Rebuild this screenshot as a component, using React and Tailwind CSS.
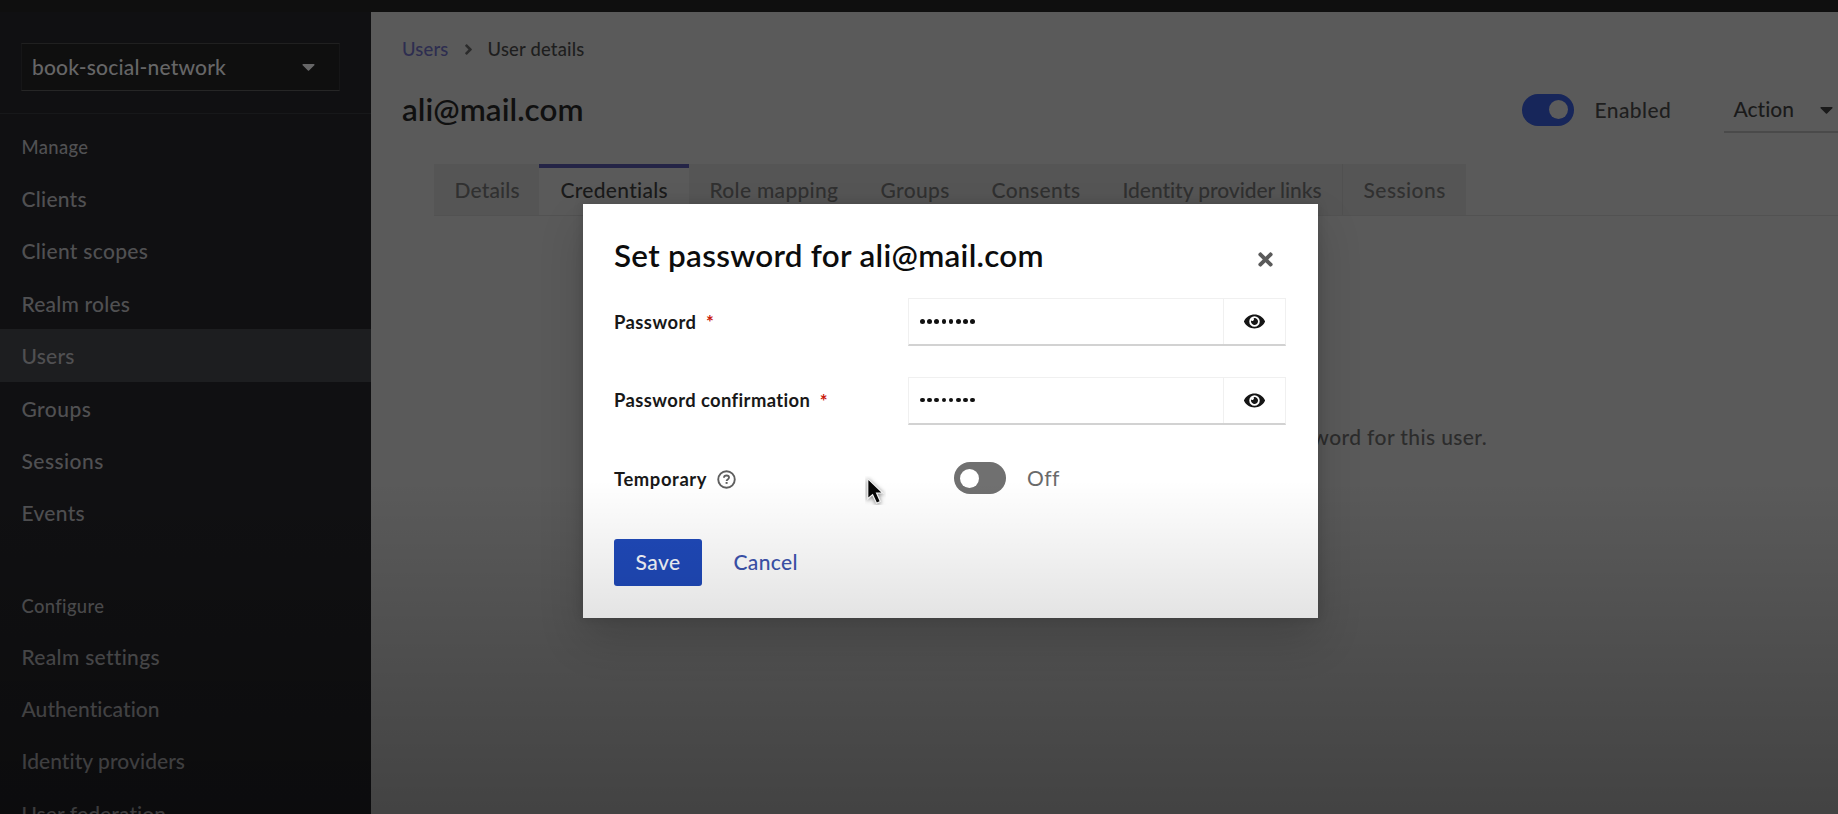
import React from 'react';
import { FaEye, FaTimes, FaCaretDown, FaAngleRight } from 'react-icons/fa';

function NavGroup({ title, items, className, listClassName }) {
  return (
    <section className={`shrink-0 ${className}`}>
      <h2 className="flex h-[26px] items-center pl-[21.5px] text-[18.4px] font-medium tracking-[0.35px] text-[#515153]">{title}</h2>
      <ul className={listClassName}>
        {items.map(({ label, active, tracking }) => (
          <li
            key={label}
            className={`flex h-[52.4px] items-center pl-[21.5px] pt-px text-[21px] font-medium text-[#505052] ${tracking} ${active ? 'bg-[#1d1e20]' : ''}`}
          >
            {label}
          </li>
        ))}
      </ul>
    </section>
  );
}

const manageItems = [
  { label: 'Clients', tracking: 'tracking-[0.25px]' },
  { label: 'Client scopes', tracking: 'tracking-[0.3px]' },
  { label: 'Realm roles', tracking: 'tracking-[0.2px]' },
  { label: 'Users', tracking: 'tracking-[0.25px]', active: true },
  { label: 'Groups', tracking: 'tracking-[0.45px]' },
  { label: 'Sessions', tracking: 'tracking-[0.45px]' },
  { label: 'Events', tracking: 'tracking-[0.3px]' },
];

const configureItems = [
  { label: 'Realm settings', tracking: 'tracking-[0.3px]' },
  { label: 'Authentication', tracking: 'tracking-[0.05px]' },
  { label: 'Identity providers', tracking: 'tracking-[0.05px]' },
  { label: 'User federation', tracking: 'tracking-[0.1px]' },
];

function Sidebar() {
  return (
    <nav className="flex h-full w-[371px] shrink-0 flex-col overflow-hidden bg-[#101012]">
      <div className="flex h-[102px] shrink-0 flex-col justify-end border-b border-[#17181a] px-[21px] pb-[22.500px]">
        <button className="flex h-[48px] w-[319px] items-center justify-between border border-b-[#262626] border-l-[#161617] border-r-[#161617] border-t-[#202020] bg-[#0f0f0f] pl-[10px] pr-[20.500px] text-[21px] font-medium tracking-[0.18px] text-[#666667]">
          book-social-network
          <FaCaretDown size={21} />
        </button>
      </div>
      <NavGroup title="Manage" items={manageItems} className="mt-[21px]" listClassName="mt-[11px]" />
      <NavGroup title="Configure" items={configureItems} className="mt-[55px]" listClassName="mt-[10px]" />
    </nav>
  );
}

const tabs = [
  { label: 'Details', box: 'w-[105px] tracking-[0.15px]' },
  { label: 'Role mapping', box: 'w-[171px] tracking-[0.3px]' },
  { label: 'Groups', box: 'w-[111px] tracking-[0.35px]' },
  { label: 'Consents', box: 'w-[131px] tracking-[0.35px]' },
  { label: 'Identity provider links', box: 'w-[241px] border-r border-[#505050] tracking-[-0.05px]' },
  { label: 'Sessions', box: 'w-[123px] tracking-[0.45px]' },
];

function Tab({ label, box }) {
  return (
    <div className={`flex items-center whitespace-nowrap bg-[#555555] pl-[20.5px] text-[21px] font-medium text-[#303030] ${box}`}>
      {label}
    </div>
  );
}

function Switch({ on, className }) {
  return (
    <span className={`flex h-[32px] w-[52.500px] shrink-0 items-center rounded-full px-[6.5px] ${on ? 'justify-end' : ''} ${className}`}>
      <span className={`h-[19px] w-[19px] rounded-full ${on ? 'bg-[#5c5c5c]' : 'bg-white'}`} />
    </span>
  );
}

function UserDetails() {
  return (
    <main className="flex min-w-0 flex-1 flex-col overflow-hidden bg-[#5a5a5a]">
      <div className="flex h-[75px] items-center pl-[31px] text-[18.4px] font-medium">
        <span className="tracking-[0.2px] text-[#2d2d50]">Users</span>
        <FaAngleRight size={17} className="ml-[11px] mr-[11px] text-[#2b2b2b]" />
        <span className="tracking-[0.2px] text-[#1e1e1e]">User details</span>
      </div>
      <div className="flex h-[46px] items-center">
        <h1 className="flex-1 pb-px pl-[31px] text-[31.4px] font-semibold tracking-[0.05px] text-[#101010]">ali@mail.com</h1>
        <Switch on className="-mt-px bg-[#17265a]" />
        <span className="ml-[20.500px] w-[129px] text-[21px] font-medium tracking-[0.4px] text-[#1e1e1e]">Enabled</span>
        <div className="flex h-[45px] w-[114.500px] items-center justify-between border-b-2 border-[#4a4a4a] pl-[10px] pr-[1.500px] text-[21px] font-medium text-[#1a1a1a]">
          Action
          <FaCaretDown size={21} />
        </div>
      </div>
      <div className="mt-[31px] ml-[63px] flex h-[52px] border-b border-[#525252]">
        <Tab {...tabs[0]} />
        <div className="flex w-[150px] items-center border-t-4 border-[#242446] pl-[21.5px] text-[21px] font-medium tracking-[0.3px] text-[#1a1a1a]">
          <span className="-mt-[4px]">Credentials</span>
        </div>
        {tabs.slice(1).map((tab) => (
          <Tab key={tab.label} {...tab} />
        ))}
      </div>
      <p className="mt-[207px] pr-[351px] text-right text-[21px] leading-[28px] font-medium tracking-[0.4px] text-[#2c2c2c]">
        You can set password for this user.
      </p>
    </main>
  );
}

function PasswordInput() {
  return (
    <div className="flex h-[48px] border border-b-2 border-[#f0f0f0] border-b-[#d2d2d2] bg-white">
      <div className="flex flex-1 items-center gap-[2.6px] border-r border-[#f0f0f0] pl-[11px]">
        {Array.from({ length: 8 }, (_, i) => (
          <span key={i} className="h-[4.6px] w-[4.6px] rounded-full bg-[#111111]" />
        ))}
      </div>
      <div className="flex w-[61px] items-center justify-center text-[#151515]">
        <FaEye size={21} />
      </div>
    </div>
  );
}

function Required() {
  return <span className="ml-[9.500px] text-[18.4px] leading-none text-[#c9190b]">*</span>;
}

function HelpIcon() {
  return (
    <svg viewBox="0 0 20 20" width="19" height="19" fill="none" stroke="#5f5f5f" strokeWidth="2" className="ml-[10px]">
      <circle cx="10" cy="10" r="8.7" />
      <path d="M7.3 8.1C7.4 6.5 8.5 5.8 10 5.8c1.600 0 2.700.9 2.700 2.200 0 1.900-2.600 1.900-2.600 3.500" strokeWidth="1.900" />
      <path d="M10.100 12.600v2" strokeWidth="2.100" />
    </svg>
  );
}

function PasswordDialog() {
  return (
    <div
      role="dialog"
      className="absolute left-[582.500px] top-[204px] flex h-[414px] w-[735px] flex-col bg-white px-[31.500px] shadow-[0_21px_42px_rgba(3,3,3,0.16),0_0_10px_rgba(3,3,3,0.14)]"
    >
      <header className="mt-[32px] flex h-[40px] items-center justify-between">
        <h2 className="text-[31.4px] font-semibold tracking-[0.3px] text-[#0c0c0c]">Set password for ali@mail.com</h2>
        <FaTimes size={21} className="mr-[10.500px] mt-[6px] text-[#5a5a5a]" />
      </header>
      <form className="mt-[22px] flex flex-col">
        <div className="grid grid-cols-[294px_1fr]">
          <label className="flex items-center pt-px text-[18.4px] font-bold tracking-[0.45px] text-[#181818]">
            Password
            <Required />
          </label>
          <PasswordInput />
        </div>
        <div className="mt-[30.500px] grid grid-cols-[294px_1fr]">
          <label className="flex items-center pt-px text-[18.4px] font-bold tracking-[0.4px] text-[#181818]">
            Password confirmation
            <Required />
          </label>
          <PasswordInput />
        </div>
        <div className="mt-[30.500px] grid h-[48px] grid-cols-[339.5px_1fr]">
          <label className="flex items-center pt-px text-[18.4px] font-bold tracking-[0.6px] text-[#181818]">
            Temporary
            <HelpIcon />
          </label>
          <div className="flex items-center pb-[2px] text-[21px] text-[#6a6a6a]">
            <Switch className="bg-[#707070]" />
            <span className="ml-[21px] tracking-[0.4px]">Off</span>
          </div>
        </div>
        <div className="mt-[36px] flex h-[47px] items-center text-[21px]">
          <button type="button" className="h-full w-[88px] rounded-[3px] bg-[#1f49b9] pb-px font-medium tracking-[0.4px] text-[#f4f6fc]">Save</button>
          <button type="button" className="ml-[31.500px] pb-px font-medium tracking-[0.35px] text-[#3c54ae]">Cancel</button>
        </div>
      </form>
    </div>
  );
}

function Pointer() {
  return (
    <svg viewBox="0 0 20 28" width="21" height="29" className="absolute left-[865px] top-[476px]">
      <path
        d="M2.500 2.500v19.500l4.700-4 3.800 8.300 3.700-1.700-3.600-8h6.200z"
        fill="#050505"
        stroke="#f1f1f1"
        strokeWidth="1.200"
        className="drop-shadow-[0_1px_2px_rgba(0,0,0,0.5)]"
      />
    </svg>
  );
}

export default function App() {
  return (
    <div className="relative flex h-[814px] w-[1838px] flex-col overflow-hidden bg-[#0f0f0f] font-['Lato','Liberation_Sans',sans-serif] [font-variant-ligatures:none]">
      <div className="h-[12px] shrink-0 bg-[#0f0f0f]" />
      <div className="flex min-h-0 flex-1">
        <Sidebar />
        <UserDetails />
      </div>
      <PasswordDialog />
      <div className="pointer-events-none absolute inset-x-0 bottom-0 h-[334px] bg-linear-to-b from-black/0 to-black/26" />
      <Pointer />
    </div>
  );
}
